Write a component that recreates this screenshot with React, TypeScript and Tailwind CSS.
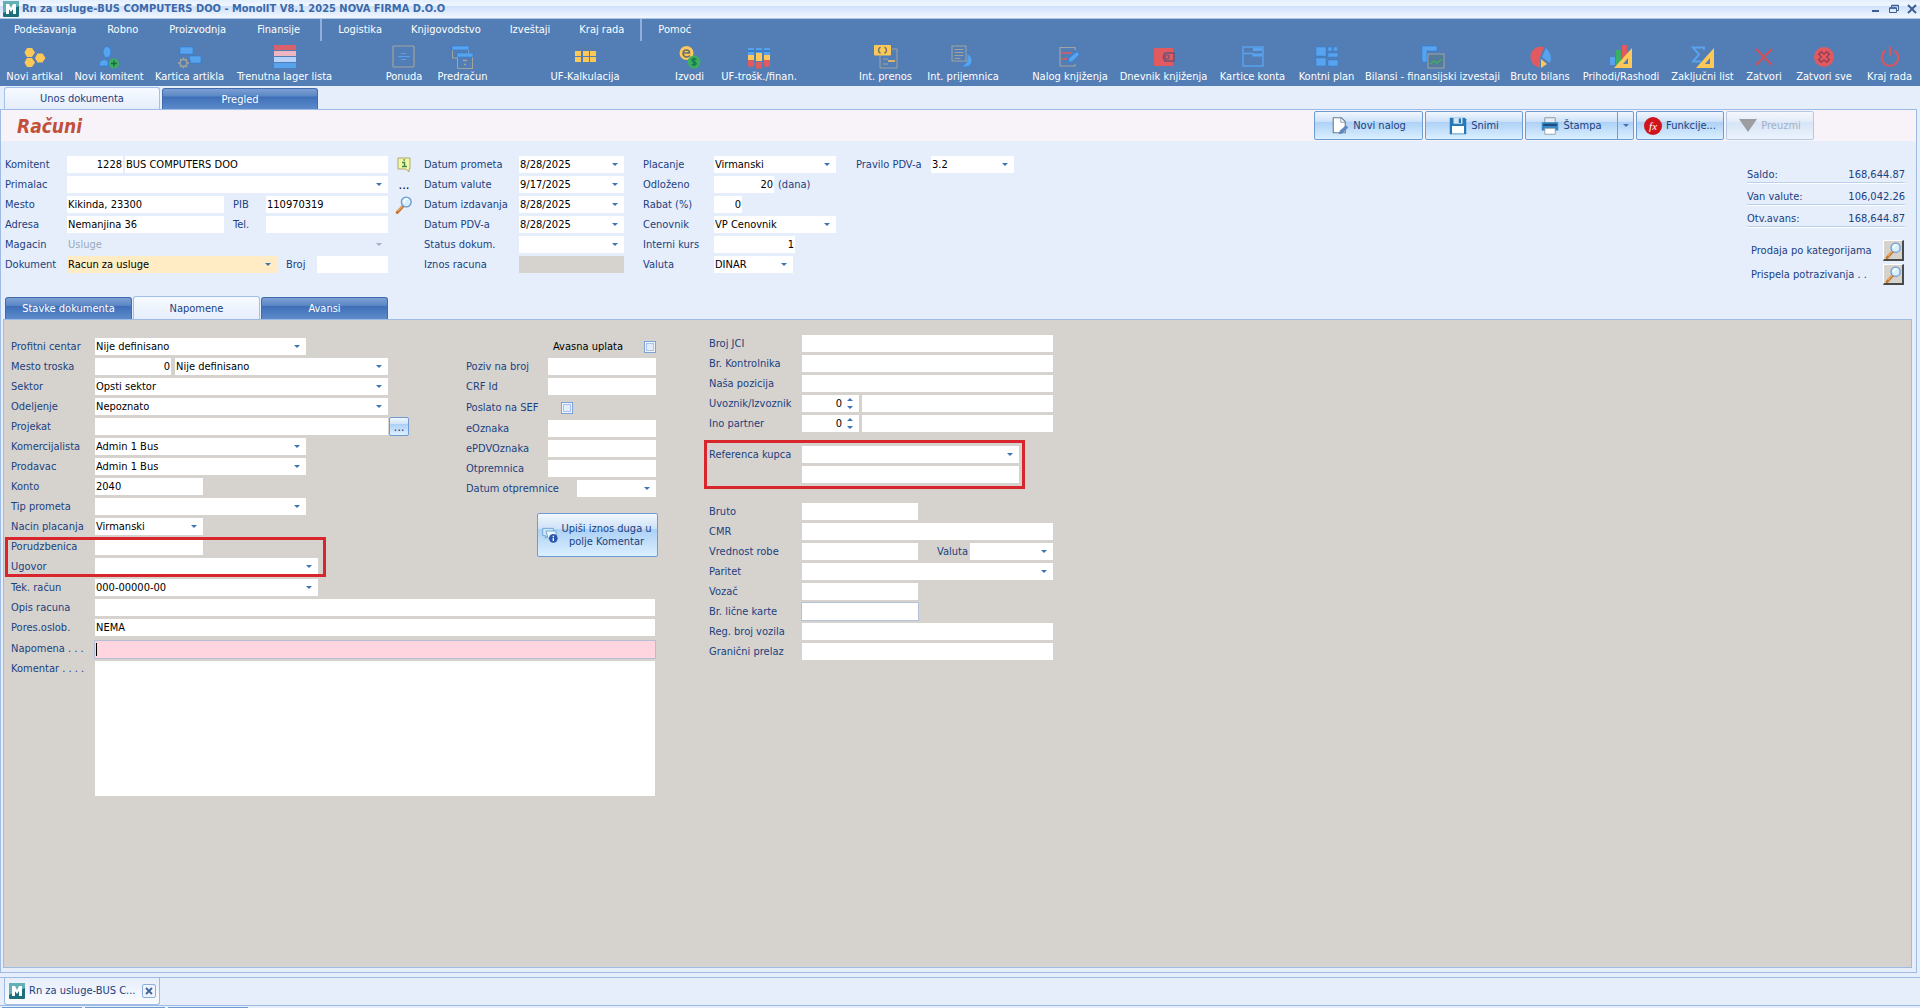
import type { ReactNode } from 'react'
import clsx from 'clsx'

const BLUE = '#58a3ee'
const DARK = '#2f7fd6'
const YELLOW = '#fdc85a'
const RED = '#e05a5f'
const GREEN = '#3bb062'
const GRAY = '#a3a39d'

function Svg({ children, size = 24 }: { children: ReactNode; size?: number }) {
  return (
    <svg width={size} height={size} viewBox="0 0 24 24" fill="none" aria-hidden="true" className="shrink-0">
      {children}
    </svg>
  )
}

const icons: Record<string, ReactNode> = {
  hexes: (
    <g fill={YELLOW}>
      <path d="M4 3h5l3 4.500-3 4.500H4L1.500 7.500z" />
      <path d="M4 13h5l3 4.500-3 4.500H4l-2.500-4.500z" />
      <path d="M14.500 8.500h5l3 4.500-3 4.500h-5L12 13z" />
    </g>
  ),
  person: (
    <g>
      <ellipse cx="10" cy="7" rx="4" ry="5.500" fill={BLUE} stroke={DARK} strokeWidth=".8" />
      <path d="M2 21c0-5 3-6.500 6-6.500l3 2V21z" fill={BLUE} stroke={DARK} strokeWidth=".8" />
      <circle cx="17" cy="18.500" r="5" fill={GREEN} />
      <path d="M17 15.500v6M14 18.500h6" stroke="#176b3b" strokeWidth="1.500" />
    </g>
  ),
  itemCard: (
    <g>
      <rect x="2" y="2" width="13" height="7" fill={BLUE} stroke={DARK} strokeWidth=".6" />
      <path d="M11 11h12v7H13z" fill={BLUE} stroke={DARK} strokeWidth=".6" />
      <circle cx="5.500" cy="18" r="3.500" stroke={GRAY} strokeWidth="1.500" />
      <path d="M5.500 12.500v2M5.500 21.500v2M0 18h2M9 18h2M2 14l1.500 1.500M9 14l-1.500 1.500M2 22l1.500-1.500M9 22l-1.500-1.500" stroke={GRAY} strokeWidth="1.300" />
    </g>
  ),
  stripes: (
    <g>
      <rect x="1" y="0" width="22" height="5" fill="#d9616b" />
      <rect x="1" y="6" width="22" height="5" fill="#eeb5c2" />
      <rect x="1" y="12" width="22" height="5" fill="#b7d2f8" />
      <rect x="1" y="18" width="22" height="5" fill={BLUE} />
    </g>
  ),
  offer: (
    <g strokeWidth="1.200">
      <rect x="1" y="1" width="21" height="21" rx="1" stroke={GRAY} />
      <path d="M9 8.500h5M6 11.500h12M9 14.500h5" stroke={BLUE} />
    </g>
  ),
  proforma: (
    <g>
      <path d="M1.500 5v8H6M17.500 5v3" stroke={GRAY} />
      <rect x="1" y="1" width="17" height="4" fill={BLUE} stroke={DARK} strokeWidth=".6" />
      <rect x="6.500" y="11.500" width="15" height="12" fill="#527db5" stroke={GRAY} />
      <rect x="6" y="8" width="16" height="4" fill={BLUE} stroke={DARK} strokeWidth=".6" />
      <path d="M12 15.500h4M13 19.500h2" stroke={GRAY} strokeWidth="1.300" />
    </g>
  ),
  calcGrid: (
    <g fill={YELLOW}>
      <path d="M2 6h6v5H2zM10 6h6v5h-6zM17 6h6v5h-6zM2 12h6v5H2zM10 12h6v5h-6zM17 12h6v5h-6z" />
      <path d="M2 3h20M2 20h20" stroke="#5a7da4" />
    </g>
  ),
  coins: (
    <g>
      <circle cx="8.500" cy="8" r="7" fill={YELLOW} />
      <path d="M6 8h5.500c0-4-6-4-6.500 0 0 4 4 5 7 2.500" stroke="#5e6d72" strokeWidth="1.500" />
      <circle cx="16" cy="17" r="6.500" fill={GREEN} />
      <path d="M18.500 14.500c-5-2-6 1.500-2.500 2.500s2.500 4-2.500 2.500M16 12.500v9" stroke="#1c794c" strokeWidth="1.500" />
    </g>
  ),
  binders: (
    <g>
      {[1, 9, 17].map((x, i) => (
        <g key={x}>
          <rect x={x} y="3" width="6" height="12" rx="1" fill={BLUE} />
          <path d={`M${x} 5h6v2h-6z`} fill={DARK} />
          <rect x={x} y={i === 1 ? 8 : 10} width="6" height="8" fill={YELLOW} />
          <path d={`M${x} ${i === 1 ? 17 : 15}h6v6q-3 2-6 0z`} fill={RED} />
        </g>
      ))}
    </g>
  ),
  transfer: (
    <g>
      <path d="M18 4h5v19H6V11" stroke={GRAY} />
      <rect x="0" y="0" width="17" height="10.500" rx="1" fill={YELLOW} />
      <path d="M6.500 2q-4 3 0 6.500M10.500 2q4 3 0 6.500" stroke="#6f7664" strokeWidth="1.500" />
      <path d="M9 14h5M9 19h5" stroke={GRAY} />
      <path d="M14 16h7" stroke={YELLOW} strokeWidth="1.500" />
    </g>
  ),
  receipt: (
    <g>
      <path d="M16 9a6.500 6.500 0 1 1-6 11c4 1 7-2 6-11z" fill={BLUE} stroke={DARK} strokeWidth=".6" />
      <rect x="1" y="1" width="14" height="15" fill="#527db5" stroke={GRAY} />
      <path d="M3.500 4.500h9M3.500 7.500h9M3.500 10.500h9M3.500 13.500h6" stroke={GRAY} />
    </g>
  ),
  journal: (
    <g>
      <path d="M17 5V2.500H2V21h15v-2" stroke={GRAY} strokeWidth="1.200" />
      <path d="M4 8h10M4 14h5" stroke={RED} strokeWidth="1.500" />
      <path d="M10 17l1-4 8-6.500 2.500 3L14 17z" fill={BLUE} stroke={DARK} strokeWidth=".8" />
    </g>
  ),
  wallet: (
    <g>
      <path d="M2 3h19v18H2z" fill={RED} />
      <path d="M13 8h9v8h-9q-3-4 0-8z" fill={RED} stroke="#6c5377" strokeWidth="1.500" />
      <circle cx="15" cy="12" r="2" stroke="#6c5377" strokeWidth="1.200" />
    </g>
  ),
  accountCard: (
    <g>
      <rect x="2" y="2" width="20" height="19" stroke={BLUE} strokeWidth="1.500" />
      <path d="M12 3h9v3h-9zM12 11.500h9V8.500h-9z" fill={BLUE} />
      <path d="M3 8.500h9v3" stroke={BLUE} strokeWidth="1.300" />
    </g>
  ),
  plan: (
    <g fill={BLUE} stroke={DARK} strokeWidth=".5">
      <path d="M1 2h10v9H1zM13 2h4v4h-4zM18.500 2h4v4h-4zM13 8h10v4H13zM1 13h10v8H1zM13 15h10v6H13z" />
    </g>
  ),
  balance: (
    <g>
      <path d="M1 1h15v5H6v11H1z" fill={BLUE} stroke={DARK} strokeWidth=".6" />
      <rect x="7" y="9" width="16" height="14" fill="#547a9c" stroke={GRAY} />
      <path d="M9 19l4-3 3 2 5-4" stroke={GREEN} strokeWidth="1.500" />
    </g>
  ),
  pie: (
    <g>
      <path d="M16 2A10.500 10.500 0 1 0 12 22.500L12 12z" fill={RED} />
      <path d="M18 3q7 7 4 15l-8-6z" fill={BLUE} />
      <path d="M13 14l6 5-6 4z" fill={YELLOW} />
    </g>
  ),
  barsRuler: (
    <g>
      <rect x="1" y="12" width="5" height="8" fill={BLUE} />
      <rect x="7" y="5" width="5" height="15" fill={GREEN} />
      <rect x="13" y="0" width="5" height="14" fill={RED} />
      <path d="M23 3v20H5zm-4 10l-5 6h5z" fill={YELLOW} fillRule="evenodd" />
    </g>
  ),
  sigmaRuler: (
    <g>
      <path d="M13 5V2.500H2l6 7-6 7h8" stroke={BLUE} strokeWidth="2" />
      <path d="M23 3v20H5zm-4 10l-5 6h5z" fill={YELLOW} fillRule="evenodd" />
    </g>
  ),
  cross: <path d="M4 4l16 16M20 4L4 20" stroke="#d94f55" strokeWidth="1.800" />,
  crossCircle: (
    <g>
      <circle cx="12" cy="12" r="10" fill={RED} />
      <path d="M7.500 7.500l9 9M16.500 7.500l-9 9" stroke="#8f3c55" strokeWidth="5" />
      <path d="M8.500 8.500l7 7M15.500 8.500l-7 7" stroke={RED} strokeWidth="2.500" />
    </g>
  ),
  power: (
    <g stroke="#d9565f" strokeWidth="2">
      <path d="M7.500 5.500a8.300 8.300 0 1 0 9 0" />
      <path d="M12 1.500v9" />
    </g>
  ),
}

const menu = [
  { items: ['Podešavanja', 'Robno', 'Proizvodnja', 'Finansije'], space: 'gap-[31px] pr-5' },
  { items: ['Logistika', 'Knjigovodstvo', 'Izveštaji', 'Kraj rada'], space: 'gap-[29px] pl-4 pr-4 border-l-2' },
  { items: ['Pomoć'], space: 'pl-4 border-l-2' },
]

const toolbar = [
  { space: '', items: [
    { icon: 'hexes', label: 'Novi artikal', w: 'w-[69px]' },
    { icon: 'person', label: 'Novi komitent', w: 'w-[80px]' },
    { icon: 'itemCard', label: 'Kartica artikla', w: 'w-[81px]' },
    { icon: 'stripes', label: 'Trenutna lager lista', w: 'w-[109px]' },
  ] },
  { space: 'ml-[39px]', items: [
    { icon: 'offer', label: 'Ponuda', w: 'w-[52px]' },
    { icon: 'proforma', label: 'Predračun', w: 'w-[65px]' },
  ] },
  { space: 'ml-[49px]', items: [{ icon: 'calcGrid', label: 'UF-Kalkulacija', w: 'w-[82px]' }] },
  { space: 'ml-[41px]', items: [
    { icon: 'coins', label: 'Izvodi', w: 'w-[45px]' },
    { icon: 'binders', label: 'UF-trošk./finan.', w: 'w-[94px]' },
  ] },
  { space: 'ml-[44px]', items: [
    { icon: 'transfer', label: 'Int. prenos', w: 'w-[71px]' },
    { icon: 'receipt', label: 'Int. prijemnica', w: 'w-[84px]' },
  ] },
  { space: 'ml-[21px]', items: [
    { icon: 'journal', label: 'Nalog knjiženja', w: 'w-[88px]' },
    { icon: 'wallet', label: 'Dnevnik knjiženja', w: 'w-[99px]' },
    { icon: 'accountCard', label: 'Kartice konta', w: 'w-[79px]' },
    { icon: 'plan', label: 'Kontni plan', w: 'w-[69px]' },
    { icon: 'balance', label: 'Bilansi - finansijski izvestaji', w: 'w-[143px]' },
    { icon: 'pie', label: 'Bruto bilans', w: 'w-[72px]' },
    { icon: 'barsRuler', label: 'Prihodi/Rashodi', w: 'w-[90px]' },
    { icon: 'sigmaRuler', label: 'Zaključni list', w: 'w-[73px]' },
    { icon: 'cross', label: 'Zatvori', w: 'w-[50px]' },
    { icon: 'crossCircle', label: 'Zatvori sve', w: 'w-[70px]' },
    { icon: 'power', label: 'Kraj rada', w: 'w-[61px]' },
  ] },
]

function Logo() {
  return (
    <svg width="16" height="16" viewBox="0 0 16 16" aria-hidden="true" className="shrink-0">
      <rect width="16" height="16" rx="1" fill="#1d6f7c" />
      <path d="M0 0h16v5L0 12z" fill="#63b0b5" />
      <path d="M3 13V3h3l2 4 2-4h3v10h-3V8l-2 3-2-3v5z" fill="#fff" />
    </svg>
  )
}

function Magnifier({ size = 18 }: { size?: number }) {
  return (
    <Svg size={size}>
      <path d="M12 12L3 22" stroke="#c9762e" strokeWidth="4" strokeLinecap="round" />
      <path d="M11 12l-7 8" stroke="#f3b56b" strokeWidth="1.500" />
      <circle cx="15" cy="8" r="6.500" fill="#d4f0fd" stroke="#6e98cf" strokeWidth="1.800" />
      <path d="M12 9q0-5 5-5" stroke="#fff" strokeWidth="2" />
    </Svg>
  )
}

function Caret({ muted }: { muted?: boolean }) {
  return (
    <svg width="6" height="3" viewBox="0 0 6 3" aria-hidden="true"
      className="absolute right-[6px] top-[7px] pointer-events-none">
      <path d="M0 0h6L3 3z" fill={muted ? '#9fb0c8' : '#3d74b5'} />
    </svg>
  )
}

interface FieldProps {
  id: string
  className: string
  value?: string
  num?: boolean
  disabled?: boolean
  label?: string
}

function Input({ id, className, value = '', num, disabled, label }: FieldProps) {
  return (
    <input id={id} type="text" defaultValue={value} disabled={disabled} aria-label={label}
      className={clsx('h-[17px] px-px text-[#000] outline-none', num && 'text-right', disabled ? 'bg-[#d6d3ce]' : 'bg-white', className)} />
  )
}

function Drop({ id, className, value = '', disabled, label }: FieldProps) {
  return (
    <span className={clsx('relative h-[17px] shrink-0', className.includes('bg-') || disabled ? '' : 'bg-white', className)}>
      <select id={id} disabled={disabled} aria-label={label} defaultValue={value}
        className={clsx('block w-full h-full appearance-none bg-transparent px-px outline-none', disabled ? 'text-[#9aa9bd]' : 'text-[#000]')}>
        <option>{value}</option>
      </select>
      <Caret muted={disabled} />
    </span>
  )
}

function Spin({ id }: { id: string }) {
  return (
    <span className="relative w-[57px] h-[17px] mr-[3px] bg-white">
      <input id={id} type="text" inputMode="numeric" defaultValue="0" className="block w-full h-full pr-[17px] text-right text-[#000] outline-none" />
      <svg width="6" height="12" viewBox="0 0 6 12" aria-hidden="true" className="absolute right-[6px] top-[3px] pointer-events-none">
        <path d="M0 3h6L3 0zM0 8h6l-3 3z" fill="#3d74b5" />
      </svg>
    </span>
  )
}

function Row({ id, label, w, children }: { id: string; label: string; w: string; children?: ReactNode }) {
  return (
    <div className="flex items-center h-[17px]">
      <label htmlFor={id} className={clsx('shrink-0', w)}>{label}</label>
      {children}
    </div>
  )
}

function Check({ id }: { id: string }) {
  return (
    <input id={id} type="checkbox"
      className="appearance-none w-3 h-3 border border-[#7ba3d8] bg-[#e3edfa] shadow-[inset_0_0_0_1px_#eef5fd,inset_0_0_0_2px_#a9c4e8]" />
  )
}

function Highlight({ className }: { className: string }) {
  return <div className={clsx('absolute border-[3px] border-[#d8262c] pointer-events-none', className)} />
}

const glossy = 'border border-[#6f9bd3] rounded-[2px] bg-[linear-gradient(#f1f7fe_0%,#cfe2f8_35%,#acd0f6_37%,#dcf0ff_100%)]'
const darkTab = 'border border-b-0 border-[#3f6cae] rounded-t-[3px] text-white bg-[linear-gradient(#7c9fd3_0%,#5c87c6_35%,#3f6fb8_40%,#5d8bcb_100%)]'
const lightTab = 'border border-b-0 border-[#a3c0e8] rounded-t-[3px] bg-[linear-gradient(#f6faff_0%,#e6eefc_100%)]'

function TitleBar() {
  return (
    <header className="flex items-center h-[19px] px-[3px] border-b border-[#a9c5e8] bg-[linear-gradient(#e3effe_0%,#f0f7ff_30%,#cfe1fb_36%,#f2f7ff_100%)]">
      <Logo />
      <h1 className="ml-[3px] text-[11px] font-bold text-[#3c69a8]">Rn za usluge-BUS COMPUTERS DOO - MonolIT V8.1 2025 NOVA FIRMA D.O.O</h1>
      <div className="ml-auto flex items-center gap-2 text-[#3e5f92]">
        <button aria-label="Minimize" className="w-[10px] h-[10px]">
          <svg width="10" height="10" viewBox="0 0 10 10"><path d="M1 6h7v2H1z" fill="currentColor" /></svg>
        </button>
        <button aria-label="Restore" className="w-[10px] h-[10px]">
          <svg width="10" height="10" viewBox="0 0 10 10" fill="none" stroke="currentColor">
            <path d="M2.500 3V1.500h7v5H8" /><path d="M.5 4h7v4.500h-7z" /><path d="M.5 4h7M2.500 1.500h7" strokeWidth="1.500" />
          </svg>
        </button>
        <button aria-label="Close" className="w-[10px] h-[10px]">
          <svg width="10" height="10" viewBox="0 0 10 10" fill="none" stroke="currentColor" strokeWidth="2"><path d="M1 1l8 8M9 1L1 9" /></svg>
        </button>
      </div>
    </header>
  )
}

function Ribbon() {
  return (
    <div className="h-[67px] bg-[#527db5] text-white">
      <nav className="flex h-[22px] pl-[14px]">
        {menu.map(group => (
          <div key={group.items[0]} className={clsx('flex items-center border-[#8db0dd]', group.space)}>
            {group.items.map(m => <button key={m}>{m}</button>)}
          </div>
        ))}
      </nav>
      <div className="flex">
        {toolbar.map(g => (
          <div key={g.items[0].label} className={clsx('flex', g.space)}>
            {g.items.map(t => (
              <button key={t.label} className={clsx('flex flex-col items-center pt-1 whitespace-nowrap', t.w)}>
                <Svg>{icons[t.icon]}</Svg>
                <span>{t.label}</span>
              </button>
            ))}
          </div>
        ))}
      </div>
    </div>
  )
}

function Actions() {
  const btn = 'flex items-center justify-center gap-1 h-[29px]'
  return (
    <div className="flex items-center gap-[2px] mr-[102px]">
      <button className={clsx(btn, glossy, 'w-[109px]')}>
        <Svg size={18}>
          <path d="M3 1h11l5 5v15H3z" fill="#fff" stroke="#6b7d95" strokeWidth="1.500" />
          <path d="M13 1v6h6" stroke="#6b7d95" />
          <path d="M10 23l2-5 8-7 3 3-8 8z" fill="#5f88bd" />
        </Svg>
        Novi nalog
      </button>
      <button className={clsx(btn, glossy, 'w-[98px]')}>
        <Svg size={18}>
          <path d="M1 1h20l2 2v20H1z" fill="#2878b8" />
          <path d="M6 1h12v8H6z" fill="#cfe3f1" /><path d="M13 2h3v6h-3z" fill="#2878b8" />
          <path d="M4 12h16v10H4z" fill="#fff" />
        </Svg>
        Snimi
      </button>
      <div className="flex">
        <button className={clsx(btn, glossy, 'w-[93px] rounded-r-none')}>
          <Svg size={18}>
            <path d="M5 1h14v7H5z" fill="#e6edf3" stroke="#6f8296" />
            <path d="M1 7h22v11H1z" fill="#3489c9" /><path d="M3 9h18v3H3z" fill="#1c4f7c" />
            <path d="M5 15h14v8H5z" fill="#fff" stroke="#7d8c9c" />
          </Svg>
          Štampa
        </button>
        <button aria-label="Štampa opcije" className={clsx('flex items-center justify-center w-[17px] h-[29px] -ml-px', glossy, 'rounded-l-none')}>
          <svg width="6" height="3" viewBox="0 0 6 3"><path d="M0 0h6L3 3z" fill="#4575b3" /></svg>
        </button>
      </div>
      <button className={clsx(btn, glossy, 'w-[88px]')}>
        <span className="flex items-center justify-center w-[18px] h-[18px] rounded-full bg-[#d0141b] text-white italic font-['Liberation_Serif',serif]">fx</span>
        Funkcije...
      </button>
      <button disabled className={clsx(btn, 'w-[88px] border border-[#b4c8e4] rounded-[2px] text-[#a3b1c6] bg-[linear-gradient(#f4f7fc_0%,#e4ecf8_35%,#d6e4f6_37%,#ebf3fd_100%)]')}>
        <svg width="18" height="13" viewBox="0 0 18 13"><path d="M0 0h18L9 13z" fill="#9b9da1" /></svg>
        Preuzmi
      </button>
    </div>
  )
}

function DocumentHead() {
  const totals = [['Saldo:', '168,644.87'], ['Van valute:', '106,042.26'], ['Otv.avans:', '168,644.87']]
  const dates = [['Datum prometa', '8/28/2025'], ['Datum valute', '9/17/2025'], ['Datum izdavanja', '8/28/2025'], ['Datum PDV-a', '8/28/2025'], ['Status dokum.', '']]
  return (
    <div className="flex items-start pt-[15px] pl-1 pr-[11px] h-[155px]">
      <div className="flex flex-col gap-[3px] w-[383px]">
        <Row id="komitent" label="Komitent" w="w-[62px]">
          <Input id="komitent" className="w-[56px] mr-[2px]" value="1228" num />
          <Input id="komitentNaziv" label="Naziv komitenta" className="w-[263px]" value="BUS COMPUTERS DOO" />
        </Row>
        <Row id="primalac" label="Primalac" w="w-[62px]"><Drop id="primalac" className="w-[321px]" /></Row>
        <Row id="mesto" label="Mesto" w="w-[62px]">
          <Input id="mesto" className="w-[157px]" value="Kikinda, 23300" />
          <label htmlFor="pib" className="w-[42px] pl-[9px]">PIB</label>
          <Input id="pib" className="w-[122px]" value="110970319" />
        </Row>
        <Row id="adresa" label="Adresa" w="w-[62px]">
          <Input id="adresa" className="w-[157px]" value="Nemanjina 36" />
          <label htmlFor="tel" className="w-[42px] pl-[9px]">Tel.</label>
          <Input id="tel" className="w-[122px]" />
        </Row>
        <Row id="magacin" label="Magacin" w="w-[62px]"><Drop id="magacin" className="w-[321px]" value="Usluge" disabled /></Row>
        <Row id="dokument" label="Dokument" w="w-[62px]">
          <Drop id="dokument" className="w-[210px] bg-[#ffecc4]" value="Racun za usluge" />
          <label htmlFor="broj" className="w-[40px] pl-[9px]">Broj</label>
          <Input id="broj" className="w-[71px]" />
        </Row>
      </div>

      <div className="flex flex-col items-center gap-[3px] w-[18px] ml-[7px] text-black">
        <button aria-label="Info" className="h-[17px]">
          <svg width="14" height="16" viewBox="0 0 14 16">
            <path d="M1 1h12v11h-1v3l-3-3H1z" fill="#f7f5a0" stroke="#a5ab74" />
            <path d="M5 5.500h2.500v4M5 9.500h5M6.500 3h1.500" stroke="#3f8a57" strokeWidth="1.500" fill="none" />
          </svg>
        </button>
        <button aria-label="Izbor primaoca" className="h-[17px] text-[13px] leading-4">...</button>
        <button aria-label="Pretraga" className="h-[17px]"><Magnifier /></button>
      </div>

      <div className="flex flex-col gap-[3px] ml-[11px] w-[219px]">
        {dates.map(([label, value]) => (
          <Row key={label} id={label} label={label} w="w-[95px]"><Drop id={label} className="w-[105px]" value={value} /></Row>
        ))}
        <Row id="iznos" label="Iznos racuna" w="w-[95px]"><Input id="iznos" className="w-[105px]" disabled /></Row>
      </div>

      <div className="flex flex-col gap-[3px] w-[213px]">
        <Row id="placanje" label="Placanje" w="w-[71px]"><Drop id="placanje" className="w-[122px]" value="Virmanski" /></Row>
        <Row id="odlozeno" label="Odloženo" w="w-[71px]">
          <Input id="odlozeno" className="w-[60px]" value="20" num />
          <span className="ml-1">(dana)</span>
        </Row>
        <Row id="rabat" label="Rabat (%)" w="w-[71px]"><Input id="rabat" className="w-[28px]" value="0" num /></Row>
        <Row id="cenovnik" label="Cenovnik" w="w-[71px]"><Drop id="cenovnik" className="w-[122px]" value="VP Cenovnik" /></Row>
        <Row id="kurs" label="Interni kurs" w="w-[71px]"><Input id="kurs" className="w-[81px]" value="1" num /></Row>
        <Row id="valuta" label="Valuta" w="w-[71px]"><Drop id="valuta" className="w-[79px]" value="DINAR" /></Row>
      </div>

      <Row id="pdv" label="Pravilo PDV-a" w="w-[75px]"><Drop id="pdv" className="w-[83px]" value="3.2" /></Row>

      <div className="ml-auto w-[158px] pt-[11px]">
        <dl className="flex flex-col gap-[6px]">
          {totals.map(([k, v]) => (
            <div key={k} className="flex justify-between h-4 border-b border-[#b9d0ec] shadow-[0_1px_0_#fff]"><dt>{k}</dt><dd>{v}</dd></div>
          ))}
        </dl>
        {['Prodaja po kategorijama', 'Prispela potrazivanja . .'].map((t, i) => (
          <div key={t} className={clsx('flex items-center justify-between h-[21px] pl-1 pr-px', i ? 'mt-[3px]' : 'mt-[13px]')}>
            <span>{t}</span>
            <button aria-label={t} className="flex items-center justify-center w-[21px] h-[21px] bg-[#d6d3ce] border border-b-2 border-r-2 border-white border-b-[#4a4a4a] border-r-[#4a4a4a]">
              <Magnifier size={17} />
            </button>
          </div>
        ))}
      </div>
    </div>
  )
}

function Notes() {
  return (
    <div className="flex items-start pl-[7px] text-[#1b4180]">
      <div className="w-[645px] pt-[18px]">
        <div className="flex items-start">
          <div className="flex flex-col gap-[3px] w-[455px]">
            <Row id="profitni" label="Profitni centar" w="w-[84px]"><Drop id="profitni" className="w-[211px]" value="Nije definisano" /></Row>
            <Row id="troskovi" label="Mesto troska" w="w-[84px]">
              <Input id="troskovi" className="w-[76px] mr-1" value="0" num />
              <Drop id="troskoviNaziv" label="Naziv mesta troska" className="w-[213px]" value="Nije definisano" />
            </Row>
            <Row id="sektor" label="Sektor" w="w-[84px]"><Drop id="sektor" className="w-[293px]" value="Opsti sektor" /></Row>
            <Row id="odeljenje" label="Odeljenje" w="w-[84px]"><Drop id="odeljenje" className="w-[293px]" value="Nepoznato" /></Row>
            <Row id="projekat" label="Projekat" w="w-[84px]">
              <Input id="projekat" className="w-[293px]" />
              <button aria-label="Izbor projekta" className={clsx('w-5 h-[19px] ml-px text-[13px] leading-3', glossy)}>...</button>
            </Row>
            <Row id="komercijalista" label="Komercijalista" w="w-[84px]"><Drop id="komercijalista" className="w-[211px]" value="Admin 1 Bus" /></Row>
            <Row id="prodavac" label="Prodavac" w="w-[84px]"><Drop id="prodavac" className="w-[211px]" value="Admin 1 Bus" /></Row>
            <Row id="konto" label="Konto" w="w-[84px]"><Input id="konto" className="w-[108px]" value="2040" /></Row>
            <Row id="tip" label="Tip prometa" w="w-[84px]"><Drop id="tip" className="w-[211px]" /></Row>
            <Row id="nacin" label="Nacin placanja" w="w-[84px]"><Drop id="nacin" className="w-[108px]" value="Virmanski" /></Row>
            <div className="relative flex flex-col gap-[3px] w-[307px]">
              <Row id="porudzbenica" label="Porudzbenica" w="w-[84px]"><Input id="porudzbenica" className="w-[108px]" /></Row>
              <Row id="ugovor" label="Ugovor" w="w-[84px]"><Drop id="ugovor" className="w-[223px]" /></Row>
              <Highlight className="-left-[6px] -right-2 -top-px -bottom-[2px]" />
            </div>
          </div>

          <div className="w-[190px]">
            <div className="flex items-center justify-end gap-[21px] h-[17px] text-black">
              <label htmlFor="avansna">Avasna uplata</label>
              <Check id="avansna" />
            </div>
            <div className="flex flex-col gap-[3px] mt-[3px]">
              <Row id="poziv" label="Poziv na broj" w="w-[82px]"><Input id="poziv" className="w-[108px]" /></Row>
              <Row id="crf" label="CRF Id" w="w-[82px]"><Input id="crf" className="w-[108px]" /></Row>
            </div>
            <div className="my-1"><Row id="sef" label="Poslato na SEF" w="w-[95px]"><Check id="sef" /></Row></div>
            <div className="flex flex-col gap-[3px]">
              <Row id="eoznaka" label="eOznaka" w="w-[82px]"><Input id="eoznaka" className="w-[108px]" /></Row>
              <Row id="epdv" label="ePDVOznaka" w="w-[82px]"><Input id="epdv" className="w-[108px]" /></Row>
              <Row id="otpremnica" label="Otpremnica" w="w-[82px]"><Input id="otpremnica" className="w-[108px]" /></Row>
              <Row id="datumOtp" label="Datum otpremnice" w="w-[111px]"><Drop id="datumOtp" className="w-[79px]" /></Row>
            </div>
            <button className={clsx('flex items-center gap-[2px] w-[121px] h-[44px] mt-4 ml-[71px] px-1 leading-[13px]', glossy)}>
              <Svg size={16}>
                <path d="M1 2h16v11H8l-3 4v-4H1z" fill="#cfe9fa" stroke="#6fa6d3" strokeWidth="1.500" />
                <path d="M6 6h15v11H9z" fill="#eaf6fe" stroke="#6fa6d3" strokeWidth="1.500" />
                <circle cx="17" cy="17" r="6.500" fill="#2c55ad" />
                <path d="M17 13v2M17 16v5" stroke="#fff" strokeWidth="2" />
              </Svg>
              <span>Upiši iznos duga u polje Komentar</span>
            </button>
          </div>
        </div>

        <div className="flex flex-col gap-[3px] mt-1">
          <Row id="tekuci" label="Tek. račun" w="w-[84px]"><Drop id="tekuci" className="w-[223px]" value="000-00000-00" /></Row>
          <Row id="opis" label="Opis racuna" w="w-[84px]"><Input id="opis" className="w-[560px]" /></Row>
          <Row id="pores" label="Pores.oslob." w="w-[84px]"><Input id="pores" className="w-[560px]" value="NEMA" /></Row>
          <div className="flex items-center h-[18px] mt-px">
            <label htmlFor="napomena" className="w-[84px]">Napomena . . .</label>
            <span className="flex items-center w-[560px] h-[17px] bg-[#ffd6e0] outline outline-[#b4bfd6]">
              <span className="w-px h-[13px] ml-px bg-black" />
              <input id="napomena" type="text" className="flex-1 h-full bg-transparent outline-none" />
            </span>
          </div>
          <div className="flex items-start">
            <label htmlFor="komentar" className="w-[84px]">Komentar . . . .</label>
            <textarea id="komentar" className="block w-[560px] h-[135px] bg-white resize-none outline-none" />
          </div>
        </div>
      </div>

      <div className="flex flex-col gap-[3px] ml-[53px] pt-[15px] w-[344px]">
        <Row id="jci" label="Broj JCI" w="w-[93px]"><Input id="jci" className="w-[251px]" /></Row>
        <Row id="kontrolnik" label="Br. Kontrolnika" w="w-[93px]"><Input id="kontrolnik" className="w-[251px]" /></Row>
        <Row id="pozicija" label="Naša pozicija" w="w-[93px]"><Input id="pozicija" className="w-[251px]" /></Row>
        <Row id="uvoznik" label="Uvoznik/Izvoznik" w="w-[93px]"><Spin id="uvoznik" /><Input id="uvoznikNaziv" label="Naziv uvoznika" className="w-[191px]" /></Row>
        <Row id="ino" label="Ino partner" w="w-[93px]"><Spin id="ino" /><Input id="inoNaziv" label="Naziv ino partnera" className="w-[191px]" /></Row>
        <div className="relative flex flex-col gap-[3px] w-[310px] mt-[11px] mb-[17px]">
          <Row id="referenca" label="Referenca kupca" w="w-[93px]"><Drop id="referenca" className="w-[217px]" /></Row>
          <Input id="referencaOpis" label="Opis reference" className="w-[217px] ml-[93px]" />
          <Highlight className="-left-[5px] -right-[6px] -top-[6px] -bottom-[6px]" />
        </div>
        <Row id="bruto" label="Bruto" w="w-[93px]"><Input id="bruto" className="w-[116px]" /></Row>
        <Row id="cmr" label="CMR" w="w-[93px]"><Input id="cmr" className="w-[251px]" /></Row>
        <Row id="vrednost" label="Vrednost robe" w="w-[93px]">
          <Input id="vrednost" className="w-[116px]" />
          <label htmlFor="valutaRobe" className="w-[52px] pl-[19px]">Valuta</label>
          <Drop id="valutaRobe" className="w-[83px]" />
        </Row>
        <Row id="paritet" label="Paritet" w="w-[93px]"><Drop id="paritet" className="w-[251px]" /></Row>
        <Row id="vozac" label="Vozač" w="w-[93px]"><Input id="vozac" className="w-[116px]" /></Row>
        <Row id="licna" label="Br. lične karte" w="w-[93px]"><Input id="licna" className="w-[116px] ring-1 ring-[#b4c3dc]" /></Row>
        <Row id="reg" label="Reg. broj vozila" w="w-[93px]"><Input id="reg" className="w-[251px]" /></Row>
        <Row id="prelaz" label="Granični prelaz" w="w-[93px]"><Input id="prelaz" className="w-[251px]" /></Row>
      </div>
    </div>
  )
}

export default function App() {
  return (
    <div className="flex flex-col min-h-screen overflow-hidden bg-[#e6eefc] text-[#1b4180] text-[11px] leading-4 font-['DejaVu_Sans_Condensed','DejaVu_Sans',sans-serif]">
      <TitleBar />
      <Ribbon />

      <div className="flex items-end gap-[2px] h-[23px] pl-1">
        <button className={clsx('w-[156px] h-[22px]', lightTab)}>Unos dokumenta</button>
        <button className={clsx('w-[156px] h-[21px] pt-px', darkTab)}>Pregled</button>
      </div>

      <main className="flex flex-col flex-1 mr-[3px] border border-[#9dbbe5]">
        <div className="flex items-center justify-between h-[31px] bg-[#f8f3f8]">
          <h2 className="pl-4 text-[19px] font-bold italic text-[#c2503c]">Računi</h2>
          <Actions />
        </div>

        <DocumentHead />

        <div className="flex items-end gap-px h-[23px] pl-1">
          <button className={clsx('w-[127px] h-[22px] pt-px', darkTab)}>Stavke dokumenta</button>
          <button className={clsx('w-[127px] h-[23px] pt-px', lightTab)}>Napomene</button>
          <button className={clsx('w-[127px] h-[22px] pt-px', darkTab)}>Avansi</button>
        </div>
        <section className="flex-1 ml-[2px] mr-1 mb-1 border border-[#9dbbe5] bg-[#d6d3ce]">
          <Notes />
        </section>
      </main>

      <footer className="mt-1 border-t border-[#9dbbe5]">
        <div className="flex items-center w-[156px] h-[27px] ml-1 pl-1 pr-[3px] border border-t-0 border-[#9dbbe5] rounded-b-[3px] bg-[linear-gradient(#e6eefc,#fafcff)]">
          <Logo />
          <span className="ml-1">Rn za usluge-BUS C...</span>
          <button aria-label="Zatvori" className="flex items-center justify-center w-[14px] h-[14px] ml-auto border border-[#8eaedb] rounded-[2px] bg-[#eef4fd]">
            <svg width="8" height="8" viewBox="0 0 8 8"><path d="M1 1l6 6M7 1L1 7" stroke="#3f659c" strokeWidth="1.800" /></svg>
          </button>
        </div>
        <div className="flex gap-[3px] h-[3px] pl-[2px] pt-px border-t border-[#9dbbe5]">
          <span className="w-[80px] bg-[#6f9bd3]" />
          <span className="w-[80px] bg-[#6f9bd3]" />
          <span className="w-[80px] bg-[#6f9bd3]" />
        </div>
      </footer>
    </div>
  )
}
